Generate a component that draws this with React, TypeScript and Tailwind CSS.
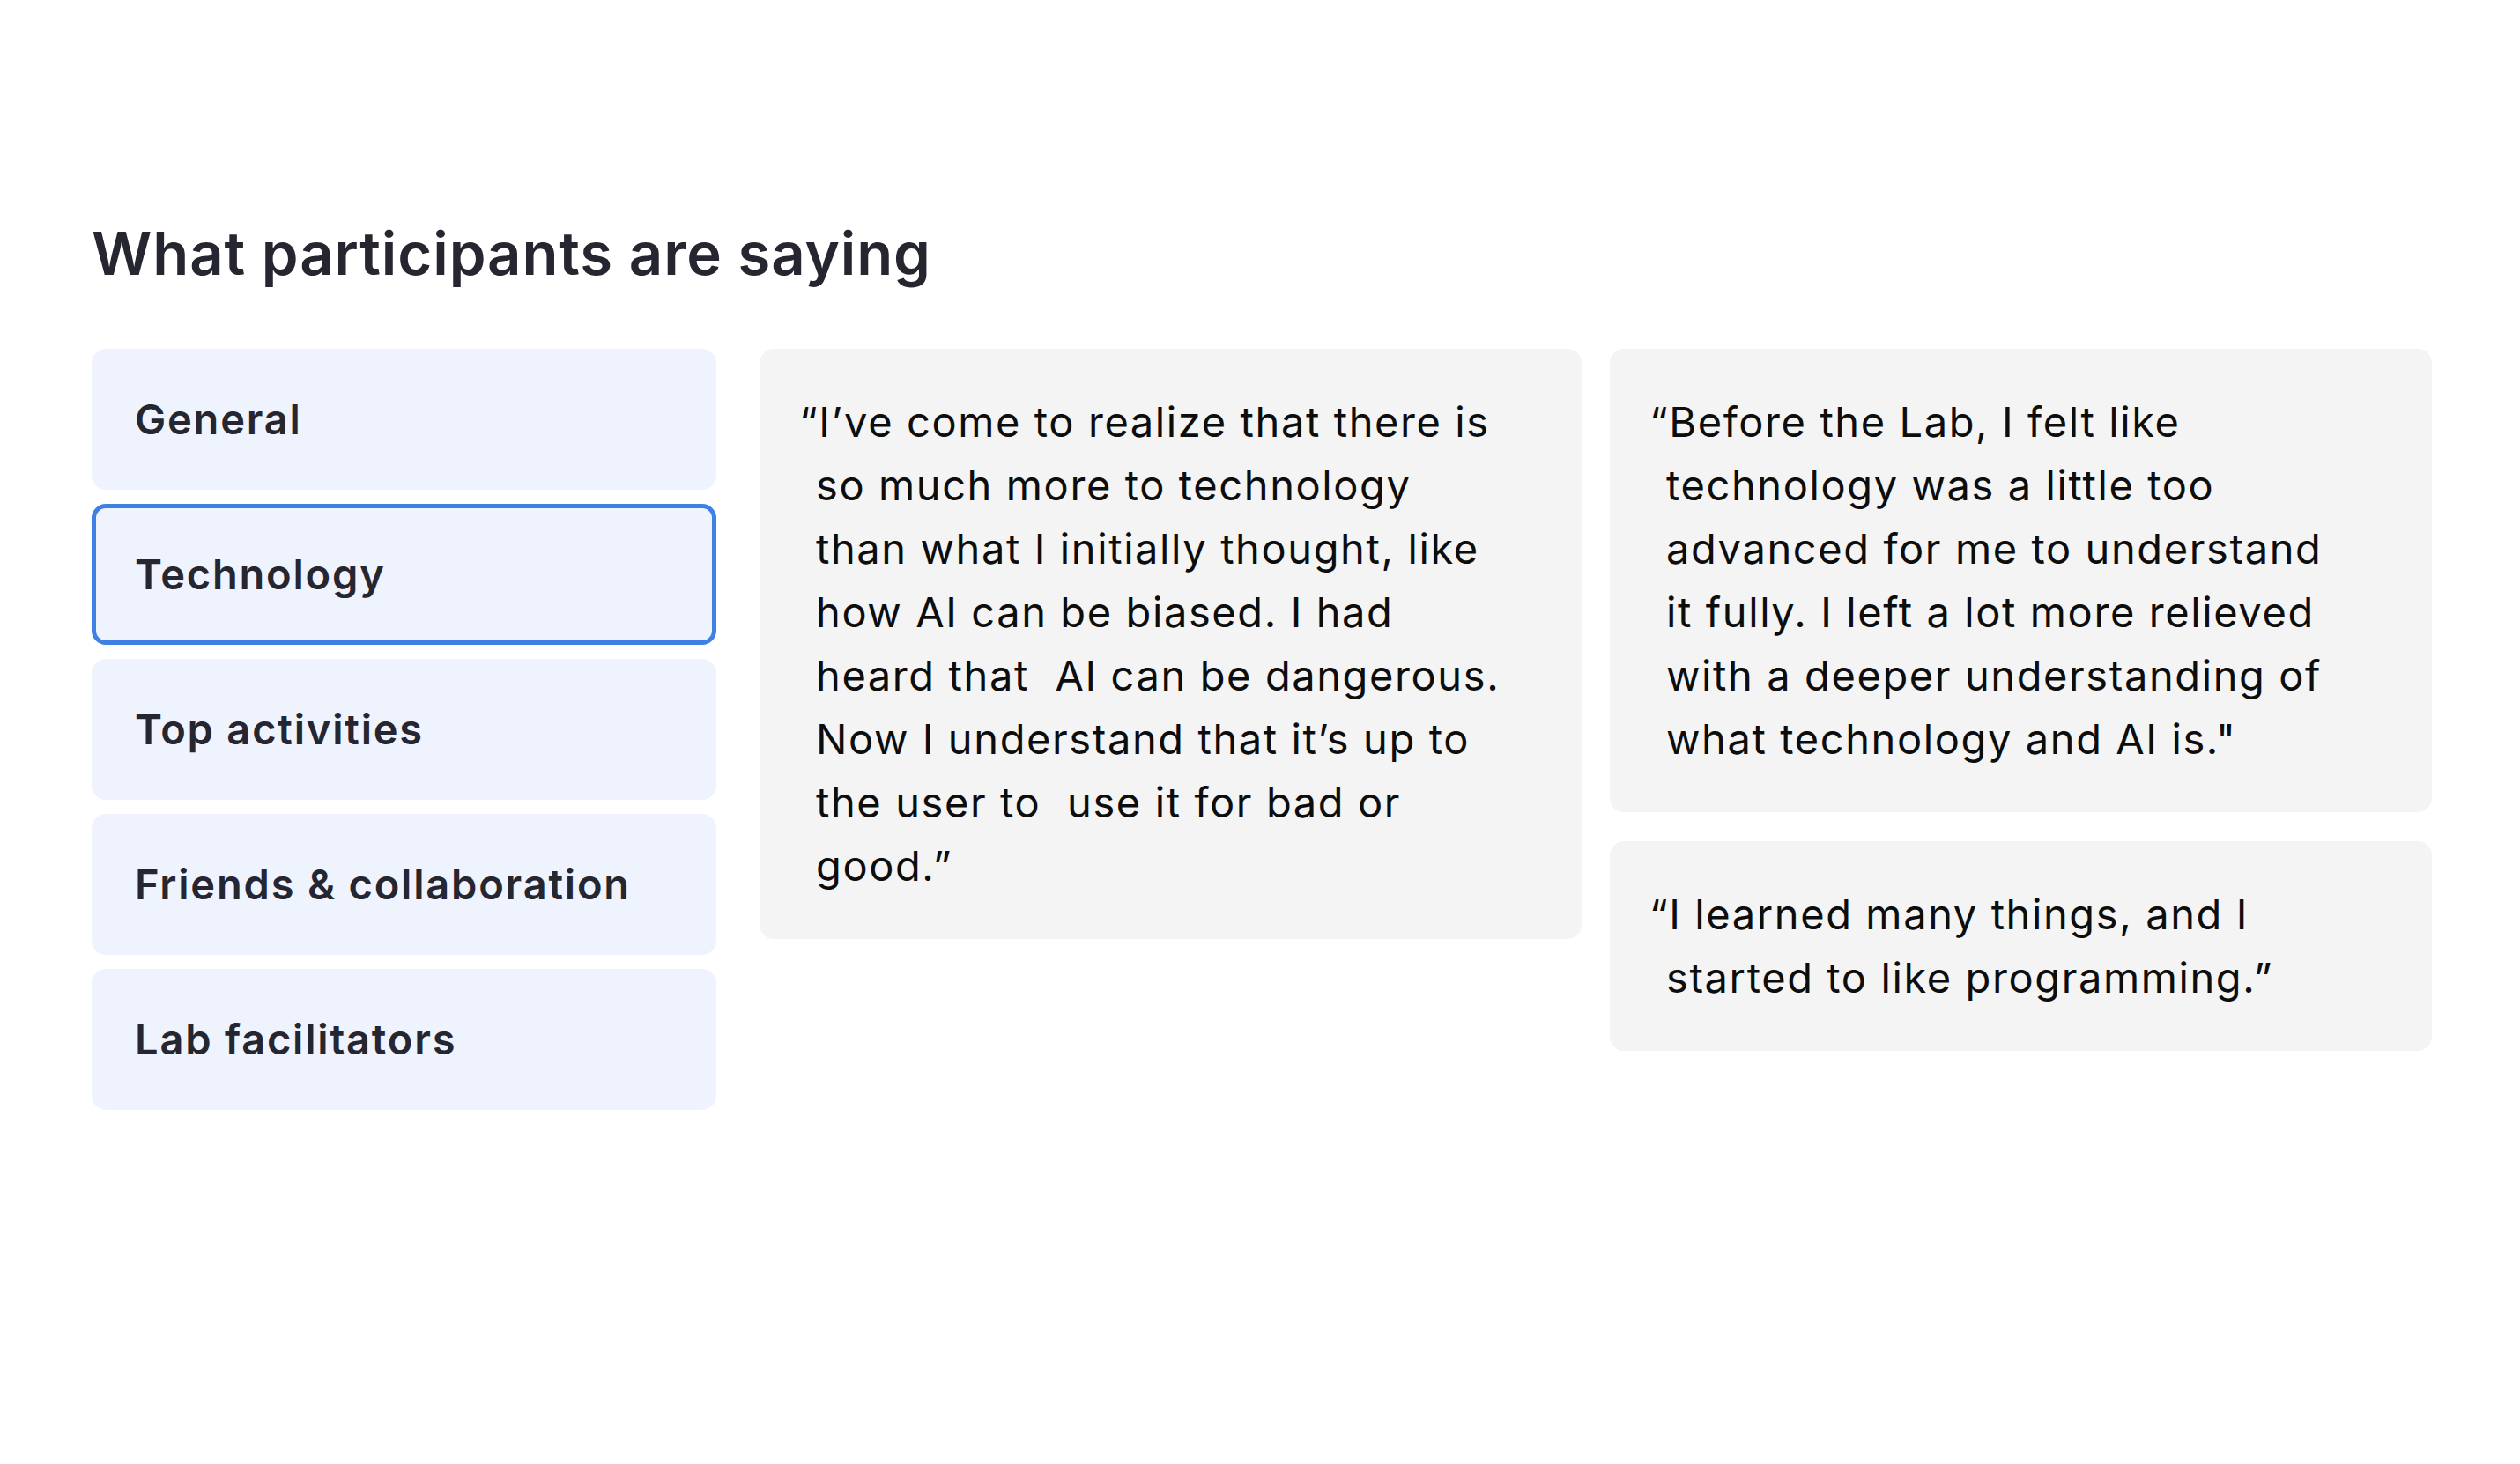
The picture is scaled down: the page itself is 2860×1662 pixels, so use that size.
import React from 'react'

const topics = ['General', 'Technology', 'Top activities', 'Friends & collaboration', 'Lab facilitators']

const QuoteCard: React.FC<{ lines: string[] }> = ({ lines }) => (
    <div className="rounded-2xl bg-[#f4f4f4] py-[47px] pl-[64px] pr-[40px]">
        <p className="whitespace-pre -indent-[19px] text-[47px] leading-[72px] font-normal tracking-[1.6px] text-[#0d0d0d]">
            {lines.join('\n')}
        </p>
    </div>
)

const App: React.FC = () => {
    const active = 'Technology'

    return (
        <div className="min-h-[1662px] w-full bg-white font-[Inter,'Noto_Sans',sans-serif]">
            <div className="pl-[104px] pr-[100px] pt-[248px]">
                <h1 className="text-[67px] leading-[80px] font-semibold tracking-[0.9px] text-[#252630]">
                    What participants are saying
                </h1>

                <div className="mt-[68px] flex items-start">
                    {/* topic list */}
                    <div className="flex w-[709px] shrink-0 flex-col gap-4">
                        {topics.map((t) => (
                            <button
                                key={t}
                                type="button"
                                className={
                                    t === active
                                        ? 'flex h-[160px] items-center rounded-2xl border-[5px] border-[#3f80e4] bg-[#eff3fe] px-[44px] text-left text-[47px] font-semibold tracking-[1.8px] text-[#252630]'
                                        : 'flex h-[160px] items-center rounded-2xl border-[5px] border-transparent bg-[#eff3fe] px-[44px] text-left text-[47px] font-semibold tracking-[1.8px] text-[#252630]'
                                }
                            >
                                {t}
                            </button>
                        ))}
                    </div>

                    {/* quotes */}
                    <div className="ml-[49px] flex flex-1 items-start gap-8">
                        <div className="flex-1">
                            <QuoteCard
                                lines={[
                                    '“I’ve come to realize that there is',
                                    'so much more to technology',
                                    'than what I initially thought, like',
                                    'how AI can be biased. I had',
                                    'heard that  AI can be dangerous.',
                                    'Now I understand that it’s up to',
                                    'the user to  use it for bad or',
                                    'good.”',
                                ]}
                            />
                        </div>
                        <div className="flex flex-1 flex-col gap-[33px]">
                            <QuoteCard
                                lines={[
                                    '“Before the Lab, I felt like',
                                    'technology was a little too',
                                    'advanced for me to understand',
                                    'it fully. I left a lot more relieved',
                                    'with a deeper understanding of',
                                    'what technology and AI is."',
                                ]}
                            />
                            <QuoteCard
                                lines={[
                                    '“I learned many things, and I',
                                    'started to like programming.”',
                                ]}
                            />
                        </div>
                    </div>
                </div>
            </div>
        </div>
    )
}

export default App
